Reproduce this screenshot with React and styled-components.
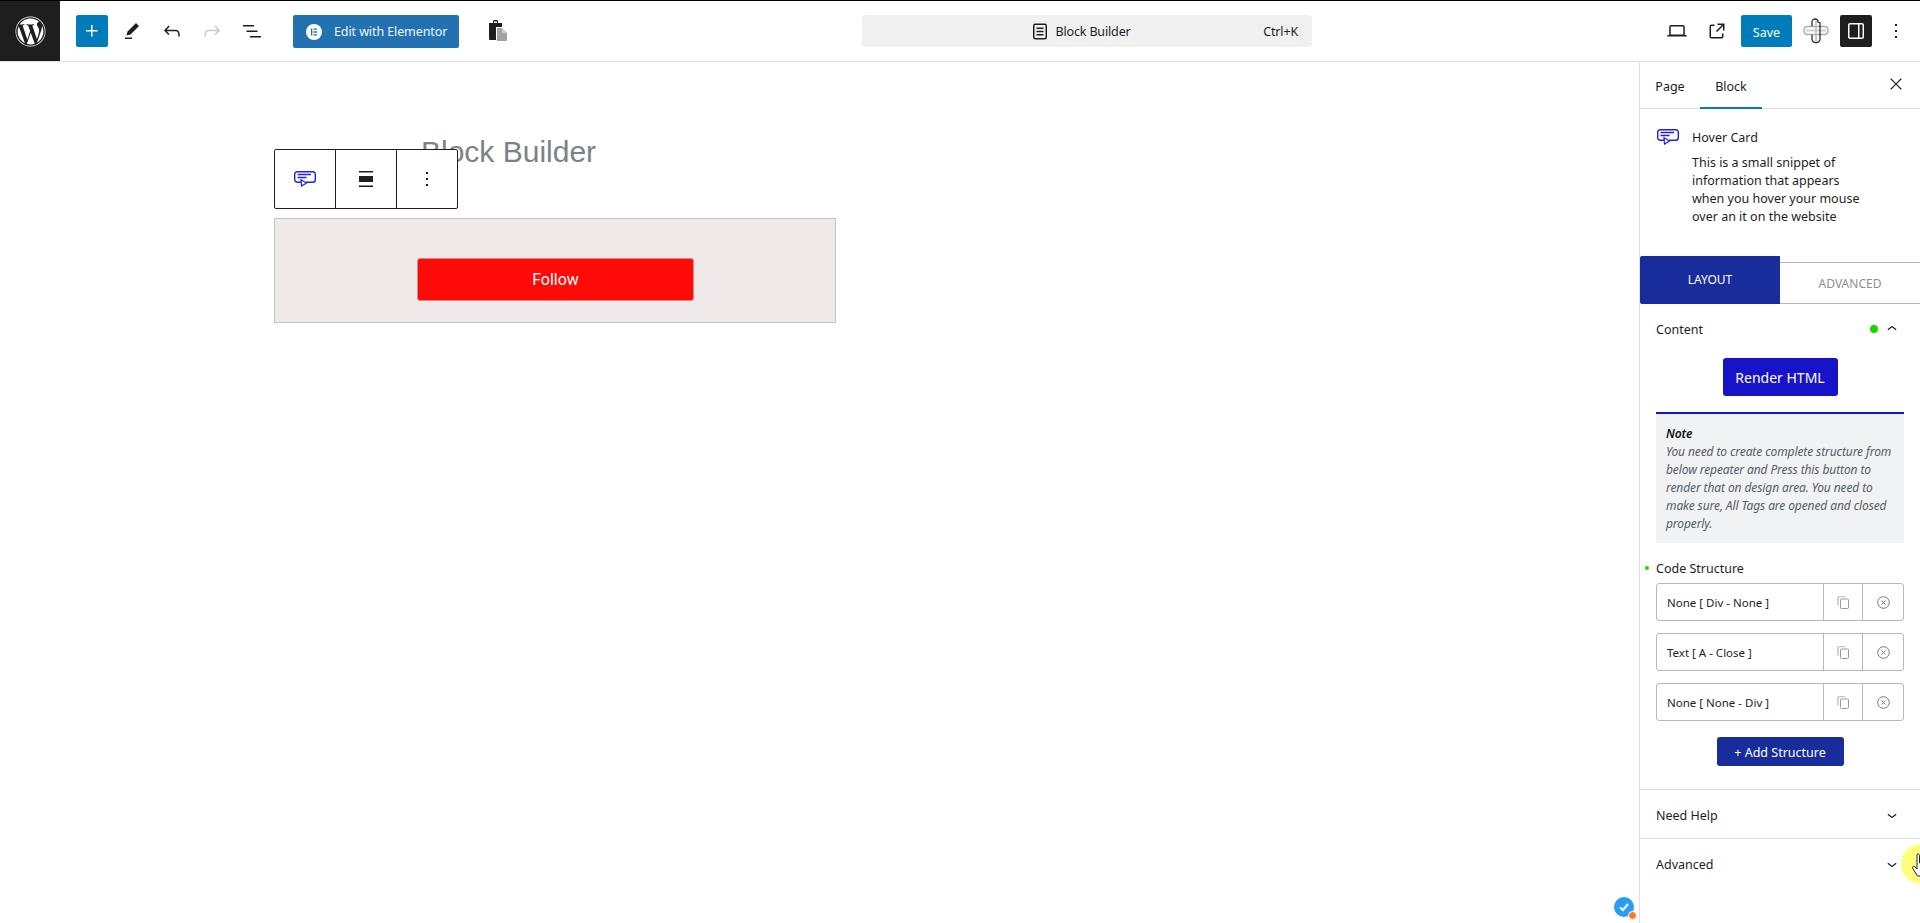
import React from 'react';
import styled, { createGlobalStyle } from 'styled-components';
import { FaWordpress } from 'react-icons/fa';

const Global = createGlobalStyle`
  * { box-sizing: border-box; }
  html, body { margin: 0; padding: 0; height: 100%; overflow: hidden; background: #fff; }
  body { font-family: "Noto Sans", "Open Sans", sans-serif; font-size: 12.5px; color: #1e1e1e; }
  button { font-family: inherit; }
`;

const Page = styled.div`
  width: 1920px;
  height: 923px;
  position: relative;
  overflow: hidden;
  display: flex;
  flex-direction: column;
  border-top: 1px solid #000;
`;

const TopBar = styled.header`
  height: 61px;
  flex: none;
  display: flex;
  align-items: center;
  border-bottom: 1px solid #e0e0e0;
`;

const Logo = styled.div`
  width: 60px;
  height: 60px;
  background: #1e1e1e;
  color: #fff;
  display: flex;
  align-items: center;
  justify-content: center;
  font-size: 31px;
`;

const LeftTools = styled.div`
  width: 802px;
  padding-left: 16px;
  display: flex;
  align-items: center;
`;

const IconSlot = styled.div`
  width: ${p => p.$w || 40}px;
  height: 32px;
  flex: none;
  display: flex;
  align-items: center;
  justify-content: center;
  color: ${p => p.$color || '#1e1e1e'};
`;

const Inserter = styled.button`
  width: 32px;
  height: 32px;
  padding: 0;
  border: 0;
  border-radius: 2px;
  background: #007cba;
  color: #fff;
  display: flex;
  align-items: center;
  justify-content: center;
  margin-right: 4px;
`;

const ElementorButton = styled.button`
  width: 166px;
  height: 33px;
  margin-left: 21px;
  padding: 1px 0 0 13px;
  border: 0;
  border-radius: 2px;
  background: #2271b1;
  color: #f0f6fc;
  font-size: 12.5px;
  letter-spacing: -0.1px;
  display: flex;
  align-items: center;
  gap: 12px;
`;

const CommandBar = styled.div`
  width: 450px;
  height: 32px;
  flex: none;
  background: #f0f0f0;
  border-radius: 4px;
  position: relative;
  display: flex;
  align-items: center;
  justify-content: center;
  gap: 7px;
  padding: 1px 11px 0 0;
  letter-spacing: -0.15px;
`;

const Shortcut = styled.span`
  position: absolute;
  right: 14px;
  top: 8px;
`;

const RightTools = styled.div`
  flex: 1;
  display: flex;
  align-items: center;
  padding-left: 345px;
`;

const SaveButton = styled.button`
  width: 51px;
  height: 32px;
  margin: 0 4px;
  border: 0;
  padding: 2px 0 0;
  border-radius: 2px;
  background: #007cba;
  color: #fff;
  font-size: 12.5px;
`;

const PanelToggle = styled.div`
  width: 32px;
  height: 32px;
  margin-left: 4px;
  border-radius: 2px;
  background: #1e1e1e;
  color: #fff;
  display: flex;
  align-items: center;
  justify-content: center;
`;

const Body = styled.div`
  flex: 1;
  display: flex;
  min-height: 0;
`;

const Canvas = styled.main`
  flex: 1;
  padding: 72px 0 0 274px;
  position: relative;
`;

const PostTitle = styled.h1`
  margin: 0 0 48px 147px;
  font: 400 30px/36px "Liberation Sans", Arial, sans-serif;
  color: #7c8287;
`;

const BlockToolbar = styled.div`
  position: absolute;
  left: 274px;
  top: 87px;
  width: 184px;
  height: 60px;
  display: flex;
  background: #fff;
  border: 1px solid #1e1e1e;
  border-radius: 2px;
`;

const ToolbarCell = styled.div`
  flex: 1;
  display: flex;
  align-items: center;
  justify-content: center;
  & + & { border-left: 1px solid #1e1e1e; }
`;

const HoverBox = styled.div`
  width: 562px;
  height: 105px;
  background: #efe9ea;
  border: 1px solid #c4c4c4;
  display: flex;
  align-items: center;
  justify-content: center;
  padding: 17px 0 0 1px;
`;

const FollowButton = styled.button`
  width: 277px;
  height: 43px;
  padding: 1px 0 0;
  border: 1px solid #d08a8a;
  border-radius: 3px;
  background: #ff0909;
  color: #fff;
  font: 400 16px Roboto, sans-serif;
`;

const Sidebar = styled.aside`
  width: 281px;
  flex: none;
  border-left: 1px solid #e0e0e0;
  display: flex;
  flex-direction: column;
`;

const SideTabs = styled.div`
  height: 47px;
  flex: none;
  display: flex;
  align-items: stretch;
  border-bottom: 1px solid #ddd;
  position: relative;
`;

const SideTab = styled.div`
  width: ${p => p.$w}px;
  display: flex;
  align-items: center;
  justify-content: center;
  padding-top: 2px;
  box-shadow: ${p => (p.$active ? 'inset 0 -2px 0 #007cba' : 'none')};
  margin-bottom: -1px;
`;

const CloseSlot = styled.div`
  margin-left: auto;
  width: 48px;
  display: flex;
  align-items: center;
  justify-content: center;
  padding-bottom: 2px;
`;

const CardInfo = styled.div`
  height: 147px;
  flex: none;
  padding: 20px 16px 0 17px;
  display: flex;
  gap: 13px;
`;

const CardIcon = styled.div`
  width: 22px;
  flex: none;
`;

const CardName = styled.div`
  line-height: 18px;
  margin-bottom: 7px;
`;

const CardDesc = styled.div`
  line-height: 18px;
  width: 175px;
`;

const ModeTabs = styled.div`
  height: 48px;
  flex: none;
  display: flex;
  align-items: flex-end;
`;

const ModeTab = styled.div`
  width: 140px;
  display: flex;
  align-items: center;
  justify-content: center;
  font-size: 12px;
  ${p =>
    p.$active
      ? `height: 48px; background: #182c9c; color: #fff; border-radius: 2px 0 0 2px; padding-bottom: 2px;`
      : `height: 42px; color: #8b8f94; border-top: 1px solid #b5b5b5; border-bottom: 1px solid #b5b5b5;`}
`;

const PanelHeader = styled.div`
  height: 50px;
  flex: none;
  display: flex;
  align-items: center;
  padding: 0 16px;
  justify-content: space-between;
`;

const HeaderRight = styled.div`
  display: flex;
  align-items: center;
  gap: 4px;
  margin-right: 2px;
`;

const GreenDot = styled.span`
  width: ${p => p.$size}px;
  height: ${p => p.$size}px;
  border-radius: 50%;
  background: #19d600;
  display: block;
`;

const CenterRow = styled.div`
  display: flex;
  justify-content: center;
`;

const RenderButton = styled.button`
  width: 115px;
  height: 38px;
  margin: 4px 0 16px;
  border: 0;
  border-radius: 3px;
  background: #1613c9;
  color: #fff;
  font-size: 14px;
  padding: 0;
`;

const Note = styled.div`
  margin: 0 16px;
  height: 131px;
  border-top: 2px solid #1613c9;
  background: #f0f2f4;
  padding: 11px 9px 0 10px;
  font-size: 12px;
  line-height: 18px;
  font-style: italic;
  letter-spacing: -0.1px;
  color: #555d66;
`;

const NoteTitle = styled.div`
  color: #111;
  font-weight: 600;
`;

const StructureLabel = styled.div`
  height: 18px;
  margin: 17px 0 5px;
  padding-left: 16px;
  line-height: 18px;
  position: relative;
`;

const LabelDot = styled.span`
  position: absolute;
  left: 5px;
  top: 6px;
`;

const StructureList = styled.div`
  margin: 0 16px;
  display: flex;
  flex-direction: column;
  gap: 12px;
`;

const StructureRow = styled.div`
  height: 38px;
  border: 1px solid #b8b8b8;
  border-radius: 3px;
  display: flex;
  align-items: stretch;
`;

const StructureName = styled.div`
  flex: 1;
  padding-left: 10px;
  font-size: 11.5px;
  display: flex;
  align-items: center;
`;

const RowAction = styled.div`
  width: ${p => p.$w}px;
  border-left: 1px solid #b8b8b8;
  color: #8a8a8a;
  display: flex;
  align-items: center;
  justify-content: center;
`;

const AddButton = styled.button`
  width: 127px;
  height: 29px;
  margin: 16px 0 23px;
  border: 0;
  border-radius: 3px;
  background: #182c9c;
  color: #fff;
  font-size: 12.5px;
  padding: 1px 0 0;
`;

const Section = styled.div`
  height: 49px;
  flex: none;
  display: flex;
  align-items: center;
  justify-content: space-between;
  padding: 2px 16px 0;
  border-top: 1px solid #ddd;
`;

const SectionIcon = styled.div`
  display: flex;
  margin-right: 2px;
`;

const CursorHalo = styled.div`
  position: absolute;
  left: 1901px;
  top: 843px;
  width: 40px;
  height: 40px;
  border-radius: 50%;
  background: #ffff7d;
`;

const HandCursor = styled.svg`
  position: absolute;
  left: 1912px;
  top: 852px;
`;

const StatusBadge = styled.div`
  position: absolute;
  left: 1614px;
  top: 896px;
  width: 20px;
  height: 20px;
  border-radius: 50%;
  background: #2b9cf5;
  display: flex;
  align-items: center;
  justify-content: center;
`;

const StatusDot = styled.span`
  position: absolute;
  right: -3px;
  bottom: -3px;
  width: 9px;
  height: 9px;
  border-radius: 50%;
  background: #f97a1f;
  border: 1px solid #fff;
`;

const WpIcon = ({ d, size = 24 }) => (
  <svg width={size} height={size} viewBox="0 0 24 24" fill="currentColor">
    <path d={d} />
  </svg>
);

const ICONS = {
  plus: 'M11 12.5V17.5H12.5V12.5H17.5V11H12.5V6H11V11H6V12.5H11Z',
  pencil: 'm19 7-3-3-8.5 8.5-1 4 4-1L19 7Zm-7 11.5H5V20h7v-1.5Z',
  undo: 'M18.3 11.7c-.6-.6-1.4-.9-2.3-.9H6.7l2.9-3.3-1.1-1-4.5 5L8.5 16l1-1-2.7-2.7H16c.5 0 .9.2 1.3.5 1 1 1 3.4 1 4.5v.3h1.5v-.2c0-1.5 0-4.3-1.5-5.7z',
  redo: 'M15.6 6.5l-1.1 1 2.9 3.3H8c-.9 0-1.7.3-2.3.9-1.4 1.5-1.4 4.2-1.4 5.6v.2h1.5v-.3c0-1.1 0-3.5 1-4.5.3-.3.7-.5 1.3-.5h9.2L14.5 15l1.1 1.1 4.6-4.6-4.6-5z',
  list: 'M3 6h11v1.5H3V6Zm3.5 5.5h11V13h-11v-1.5ZM21 17H10v1.5h11V17Z',
  laptop: 'M20.5 16h-.7V8c0-1.1-.9-2-2-2H6.2c-1.1 0-2 .9-2 2v8h-.7c-.8 0-1.5.7-1.5 1.5h20c0-.8-.7-1.5-1.5-1.5zM5.7 8c0-.3.2-.5.5-.5h11.6c.3 0 .5.2.5.5v7.6H5.7V8z',
  external: 'M19.5 4.5h-7V6h4.44l-5.97 5.97 1.06 1.06L18 7.06v4.44h1.5v-7Zm-13 1a2 2 0 0 0-2 2v10a2 2 0 0 0 2 2h10a2 2 0 0 0 2-2v-3H17v3a.5.5 0 0 1-.5.5h-10a.5.5 0 0 1-.5-.5v-10a.5.5 0 0 1 .5-.5h3V5.5h-3Z',
  more: 'M13 19h-2v-2h2v2zm0-6h-2v-2h2v2zm0-6h-2V5h2v2z',
  close: 'm13.06 12 6.47-6.47-1.06-1.06L12 10.94 5.53 4.47 4.47 5.53 10.94 12l-6.47 6.47 1.06 1.06L12 13.06l6.47 6.47 1.06-1.06L13.06 12Z',
  down: 'M17.5 11.6L12 16l-5.5-4.4.9-1.2L12 14l4.5-3.6 1 1.2z',
  up: 'M6.5 12.4L12 8l5.5 4.4-.9 1.2L12 10l-4.5 3.6-1-1.2z',
  alignFull: 'M5 4h14v1.5H5zM5 9h14v6H5zM5 18.5h14V20H5z',
  drawer: 'M18 4H6c-1.1 0-2 .9-2 2v12c0 1.1.9 2 2 2h12c1.1 0 2-.9 2-2V6c0-1.1-.9-2-2-2zm-4 14.5H6c-.3 0-.5-.2-.5-.5V6c0-.3.2-.5.5-.5h8v13zm4.500-.5c0 .3-.2.5-.5.5h-2.500v-13H18c.3 0 .5.2.5.5v12z',
};

const HoverCardIcon = () => (
  <svg width="22" height="16" viewBox="0 0 22 16" fill="none" stroke="#2222dd" strokeWidth="1.400">
    <path d="M7 11.300H3.200A2.500 2.500 0 0 1 .7 8.800V3.200A2.500 2.500 0 0 1 3.200.7h15.600a2.500 2.500 0 0 1 2.500 2.500v5.600a2.500 2.500 0 0 1-2.500 2.500H12" />
    <path d="M3.500 3.600h13.500M3.500 6.600h9" strokeWidth="1.500" />
    <path d="M7 8.800l5.500 3.300-5 3z" strokeWidth="1.200" />
  </svg>
);

const PasteIcon = () => (
  <svg width="20" height="24" viewBox="0 0 20 24">
    <path d="M1 4h4V2.500C5 1.500 5.700 1 6.500 1h2c.8 0 1.500.5 1.500 1.500V4h4v4H8v13H2a1 1 0 0 1-1-1z" fill="#1e1e1e" />
    <path d="M6 4h3V2.500H6z" fill="#fff" />
    <path d="M9 9h5l5 5v8H9z" fill="#a3a3a3" />
    <path d="M14 9l5 5h-5z" fill="#d0d0d0" />
  </svg>
);

const ChainIcon = () => (
  <svg width="26" height="26" viewBox="0 0 26 26" fill="none">
    <rect x="1" y="8.500" width="24" height="8" rx="3.500" stroke="#a9a9a9" strokeWidth="1.500" />
    <path d="M3 12.500h20" stroke="#d0d0d0" strokeWidth="2" />
    <path d="M9 8V4a3 3 0 0 1 6 0l2 1v16a3.500 3.500 0 0 1-3.500 3.500h-1A3.500 3.500 0 0 1 9 21v-4" stroke="#333" strokeWidth="1.300" />
    <path d="M13 2v22" stroke="#bbb" strokeWidth="1.500" />
  </svg>
);

const DocIcon = () => (
  <svg width="16" height="17" viewBox="0 0 16 17" fill="none" stroke="#1e1e1e" strokeWidth="1.500">
    <rect x="1.750" y="1.250" width="12.500" height="14.500" rx="1.500" />
    <path d="M4.500 5.200h7M4.500 8.500h7M4.500 11.800h7" />
  </svg>
);

const ElementorMark = () => (
  <svg width="16" height="16" viewBox="0 0 16 16">
    <circle cx="8" cy="8" r="8" fill="#fff" />
    <path d="M5 4.500h1.300v7H5zM7.400 4.500H11v1.300H7.400zM7.400 7.350H11v1.300H7.400zM7.400 10.200H11v1.300H7.400z" fill="#2271b1" />
  </svg>
);

const CopyIcon = () => (
  <svg width="12" height="13" viewBox="0 0 12 13" fill="none" stroke="#9a9a9a" strokeWidth="1">
    <rect x="3.500" y="3" width="8" height="9.500" rx="1" />
    <path d="M1 9.500V1.500A1 1 0 0 1 2 .5h6" strokeWidth="1.500" stroke="#c4c4c4" />
  </svg>
);

const RemoveIcon = () => (
  <svg width="13" height="13" viewBox="0 0 13 13" fill="none" stroke="#777" strokeWidth="1">
    <circle cx="6.500" cy="6.500" r="5.800" />
    <path d="M4.500 4.500l4 4M8.500 4.500l-4 4" />
  </svg>
);

const structures = ['None [ Div - None ]', 'Text [ A - Close ]', 'None [ None - Div ]'];

const App = () => {
  return (
    <Page>
      <Global />
      <TopBar>
        <Logo>
          <FaWordpress />
        </Logo>
        <LeftTools>
          <Inserter>
            <WpIcon d={ICONS.plus} />
          </Inserter>
          <IconSlot><WpIcon d={ICONS.pencil} /></IconSlot>
          <IconSlot><WpIcon d={ICONS.undo} /></IconSlot>
          <IconSlot $color="#c8c8c8"><WpIcon d={ICONS.redo} /></IconSlot>
          <IconSlot><WpIcon d={ICONS.list} /></IconSlot>
          <ElementorButton>
            <ElementorMark />
            Edit with Elementor
          </ElementorButton>
          <IconSlot $w={78}><PasteIcon /></IconSlot>
        </LeftTools>
        <CommandBar>
          <DocIcon />
          Block Builder
          <Shortcut>Ctrl+K</Shortcut>
        </CommandBar>
        <RightTools>
          <IconSlot><WpIcon d={ICONS.laptop} /></IconSlot>
          <IconSlot><WpIcon d={ICONS.external} /></IconSlot>
          <SaveButton>Save</SaveButton>
          <IconSlot $w={40}><ChainIcon /></IconSlot>
          <PanelToggle><WpIcon d={ICONS.drawer} /></PanelToggle>
          <IconSlot $w={48}><WpIcon d={ICONS.more} /></IconSlot>
        </RightTools>
      </TopBar>

      <Body>
        <Canvas>
          <PostTitle>Block Builder</PostTitle>
          <BlockToolbar>
            <ToolbarCell><HoverCardIcon /></ToolbarCell>
            <ToolbarCell><WpIcon d={ICONS.alignFull} /></ToolbarCell>
            <ToolbarCell><WpIcon d={ICONS.more} /></ToolbarCell>
          </BlockToolbar>
          <HoverBox>
            <FollowButton>Follow</FollowButton>
          </HoverBox>
        </Canvas>

        <Sidebar>
          <SideTabs>
            <SideTab $w={60}>Page</SideTab>
            <SideTab $w={62} $active>Block</SideTab>
            <CloseSlot><WpIcon d={ICONS.close} size={18} /></CloseSlot>
          </SideTabs>
          <CardInfo>
            <CardIcon><HoverCardIcon /></CardIcon>
            <div>
              <CardName>Hover Card</CardName>
              <CardDesc>
                This is a small snippet of information that appears when you hover your mouse over an it on the website
              </CardDesc>
            </div>
          </CardInfo>
          <ModeTabs>
            <ModeTab $active>LAYOUT</ModeTab>
            <ModeTab>ADVANCED</ModeTab>
          </ModeTabs>
          <PanelHeader>
            Content
            <HeaderRight>
              <GreenDot $size={8} />
              <WpIcon d={ICONS.up} size={20} />
            </HeaderRight>
          </PanelHeader>
          <CenterRow>
            <RenderButton>Render HTML</RenderButton>
          </CenterRow>
          <Note>
            <NoteTitle>Note</NoteTitle>
            You need to create complete structure from below repeater and Press this button to render that on design area. You need to make sure, All Tags are opened and closed properly.
          </Note>
          <StructureLabel>
            <LabelDot><GreenDot $size={4} /></LabelDot>
            Code Structure
          </StructureLabel>
          <StructureList>
            {structures.map(name => (
              <StructureRow key={name}>
                <StructureName>{name}</StructureName>
                <RowAction $w={39}><CopyIcon /></RowAction>
                <RowAction $w={41}><RemoveIcon /></RowAction>
              </StructureRow>
            ))}
          </StructureList>
          <CenterRow>
            <AddButton>+ Add Structure</AddButton>
          </CenterRow>
          <Section>
            Need Help
            <SectionIcon><WpIcon d={ICONS.down} size={20} /></SectionIcon>
          </Section>
          <Section>
            Advanced
            <SectionIcon><WpIcon d={ICONS.down} size={20} /></SectionIcon>
          </Section>
        </Sidebar>
      </Body>

      <StatusBadge>
        <svg width="12" height="12" viewBox="0 0 12 12" fill="none" stroke="#fff" strokeWidth="2">
          <path d="M2 6.500l3 2.500 5-6" />
        </svg>
        <StatusDot />
      </StatusBadge>
      <CursorHalo />
      <HandCursor width="14" height="24" viewBox="0 0 14 24" fill="#fff" stroke="#222" strokeWidth="1">
        <path d="M5 1.500c1-1 2.500-.5 2.500 1V10l6 1v12H5.500L.5 15c-.5-1 1-2.500 2.500-1l2 2V3z" />
      </HandCursor>
    </Page>
  );
};

export default App;
